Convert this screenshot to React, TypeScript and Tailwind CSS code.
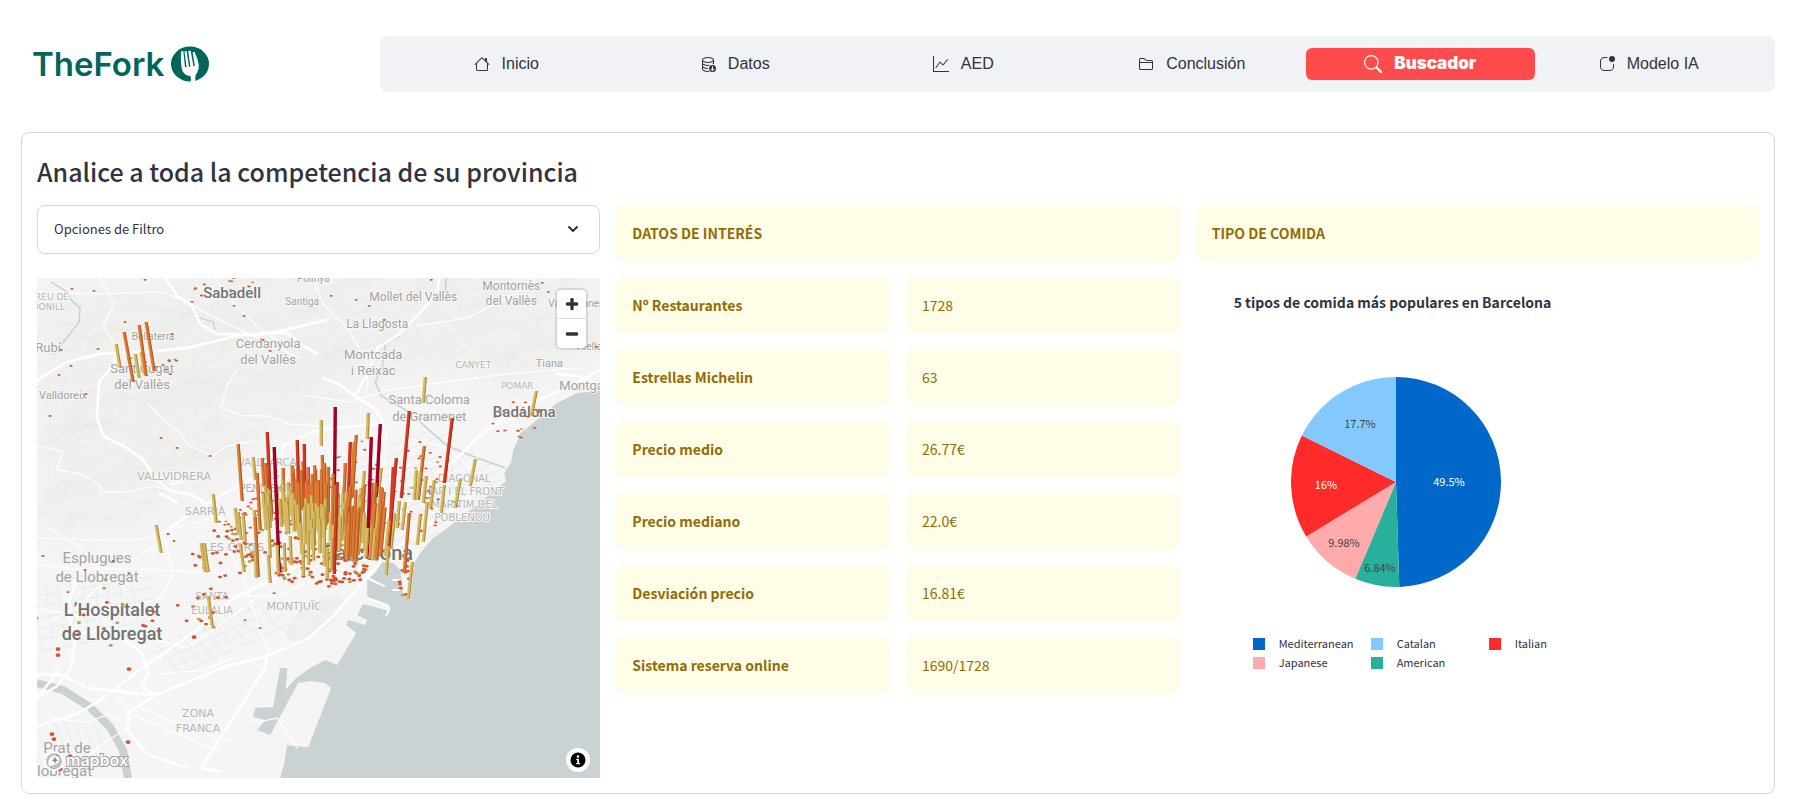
import type { ReactNode } from "react";
import {
  BsAppIndicator,
  BsDatabaseDown,
  BsFolder2,
  BsGraphUp,
  BsHouse,
  BsSearch,
} from "react-icons/bs";
import { ChevronDown, Minus, Plus } from "lucide-react";

/* ---------- data ---------- */

const navItems = [
  { label: "Inicio", Icon: BsHouse },
  { label: "Datos", Icon: BsDatabaseDown },
  { label: "AED", Icon: BsGraphUp },
  { label: "Conclusión", Icon: BsFolder2 },
  { label: "Buscador", Icon: BsSearch, active: true },
  { label: "Modelo IA", Icon: BsAppIndicator },
];

const stats = [
  ["Nº Restaurantes", "1728"],
  ["Estrellas Michelin", "63"],
  ["Precio medio", "26.77€"],
  ["Precio mediano", "22.0€"],
  ["Desviación precio", "16.81€"],
  ["Sistema reserva online", "1690/1728"],
];

/* Clockwise from the top */
const slices = [
  { value: 49.5, label: "49.5%", color: "#0068c9", text: "#ffffff", x: 158, y: 105 },
  { value: 6.84, label: "6.84%", color: "#29b09d", text: "#444444", x: 89, y: 191 },
  { value: 9.98, label: "9.98%", color: "#ffabab", text: "#444444", x: 53, y: 166 },
  { value: 15.98, label: "16%", color: "#ff2b2b", text: "#ffffff", x: 35, y: 108 },
  { value: 17.7, label: "17.7%", color: "#83c9ff", text: "#444444", x: 69, y: 47 },
];

const legend = [
  { name: "Mediterranean", swatch: "bg-[#0068c9]" },
  { name: "Catalan", swatch: "bg-[#83c9ff]" },
  { name: "Italian", swatch: "bg-[#ff2b2b]" },
  { name: "Japanese", swatch: "bg-[#ffabab]" },
  { name: "American", swatch: "bg-[#29b09d]" },
];

/* ---------- map ---------- */

type Tone = "y" | "o" | "r" | "m";
type Bar = [number, number, number, number, Tone];

const tones: Record<Tone, [string, string]> = {
  y: ["#d8ba62", "#a68c3c"],
  o: ["#de7a33", "#ab5722"],
  r: ["#da3a22", "#a32a18"],
  m: ["#b0002a", "#80001e"],
};

const fixedBars: Bar[] = [
  [79, 66, 83, 90, "y"], [87, 54, 96, 104, "o"], [102, 47, 109, 98, "o"], [109, 44, 117, 93, "o"],
  [98, 76, 102, 100, "y"], [104, 74, 108, 97, "y"],
  [298, 129, 297, 235, "m"], [300, 204, 297, 296, "r"], [343, 146, 339, 219, "m"],
  [334, 159, 330, 279, "m"], [237, 169, 242, 294, "m"], [230, 154, 234, 239, "r"],
  [260, 162, 262, 229, "r"], [267, 166, 268, 230, "r"], [313, 164, 311, 219, "r"],
  [372, 133, 364, 220, "r"], [415, 140, 407, 205, "r"], [359, 180, 351, 275, "r"],
  [356, 189, 352, 268, "r"], [201, 166, 205, 223, "o"], [225, 180, 227, 209, "o"],
  [228, 185, 230, 215, "o"], [220, 195, 223, 252, "o"], [246, 190, 246, 219, "o"],
  [218, 239, 221, 299, "o"], [285, 177, 286, 222, "o"], [291, 189, 291, 245, "o"],
  [319, 157, 315, 219, "o"], [317, 164, 314, 215, "o"], [308, 185, 306, 245, "o"],
  [387, 168, 381, 222, "o"], [372, 235, 367, 295, "o"], [256, 191, 258, 230, "o"],
  [264, 192, 265, 232, "o"], [287, 185, 288, 235, "o"], [281, 202, 282, 250, "o"],
  [275, 204, 276, 248, "o"], [296, 196, 295, 246, "o"],
  [284, 142, 284, 168, "y"], [331, 135, 330, 161, "y"], [216, 179, 218, 202, "y"],
  [176, 216, 179, 245, "y"], [198, 230, 201, 256, "y"], [201, 234, 204, 262, "y"],
  [206, 236, 208, 264, "y"], [164, 265, 168, 294, "y"], [167, 265, 171, 294, "y"],
  [203, 266, 207, 294, "y"], [119, 247, 124, 275, "y"], [171, 318, 175, 348, "y"],
  [375, 284, 371, 321, "y"], [379, 192, 377, 222, "y"], [383, 194, 380, 222, "y"],
  [389, 198, 386, 225, "y"], [397, 202, 393, 230, "y"], [407, 207, 404, 235, "y"],
  [423, 201, 418, 230, "y"], [438, 181, 433, 208, "y"], [362, 223, 360, 250, "y"],
  [368, 224, 365, 252, "y"], [383, 237, 380, 267, "y"], [390, 224, 386, 264, "y"],
  [351, 268, 349, 297, "y"], [388, 99, 386, 125, "y"], [499, 113, 494, 138, "y"],
  [231, 277, 233, 305, "y"], [232, 254, 233, 280, "y"], [253, 258, 254, 287, "y"],
  [240, 267, 241, 296, "y"], [247, 265, 248, 294, "y"], [218, 271, 219, 300, "y"],
  [266, 265, 266, 298, "y"], [290, 270, 290, 300, "y"], [327, 193, 325, 219, "y"],
  [344, 190, 341, 216, "y"], [251, 204, 252, 234, "y"], [226, 215, 229, 252, "y"],
  [231, 215, 233, 250, "y"], [217, 232, 219, 262, "y"],
];

/* Deterministic noise keeps the drawing identical between renders */
function noise(seed: number) {
  let s = seed;
  return () => {
    s = (s * 16807) % 2147483647;
    return s / 2147483647;
  };
}

function clusterBars(): Bar[] {
  const rnd = noise(4217);
  const bars: Bar[] = [];
  const add = (n: number, x0: number, x1: number, y0: number, y1: number, h0: number, h1: number, t: Tone) => {
    for (let i = 0; i < n; i++) {
      const x = x0 + rnd() * (x1 - x0);
      const y = y0 + rnd() * (y1 - y0);
      const h = h0 + rnd() * (h1 - h0);
      bars.push([x + (x - 285) * 0.0016 * h, y - h, x, y, t]);
    }
  };
  add(22, 256, 294, 226, 250, 36, 46, "o");
  add(28, 254, 300, 232, 262, 26, 32, "y");
  add(18, 222, 256, 228, 256, 24, 32, "y");
  add(14, 264, 300, 262, 292, 26, 34, "y");
  add(34, 298, 342, 240, 284, 26, 34, "y");
  add(24, 308, 344, 258, 284, 44, 58, "o");
  add(16, 326, 354, 256, 282, 28, 36, "y");
  return bars;
}

const bars = [...fixedBars, ...clusterBars()].sort((a, b) => a[3] - b[3]);

const dots = (() => {
  const rnd = noise(991);
  const out: { x: number; y: number; c: string }[] = [];
  const colors = ["#d5532f", "#d5532f", "#d5532f", "#b3a25a"];
  const fill = (n: number, cx: number, cy: number, rx: number, ry: number) => {
    for (let i = 0; i < n; i++) {
      const a = rnd() * Math.PI * 2;
      const r = Math.sqrt(rnd());
      out.push({ x: cx + Math.cos(a) * r * rx, y: cy + Math.sin(a) * r * ry, c: colors[Math.floor(rnd() * 4)] });
    }
  };
  fill(150, 265, 250, 78, 48);
  fill(80, 285, 292, 50, 17);
  fill(34, 190, 270, 40, 30);
  fill(40, 350, 205, 60, 50);
  fill(26, 388, 215, 34, 40);
  fill(12, 366, 295, 6, 24);
  fill(20, 480, 140, 26, 20);
  fill(14, 168, 330, 32, 20);
  fill(12, 116, 88, 30, 14);
  fill(10, 190, 12, 34, 16);
  fill(14, 75, 335, 45, 34);
  return out;
})();

const looseDots: [number, number][] = [
  [35, 11], [57, 13], [108, 2], [88, 44], [24, 72], [61, 71], [34, 88], [22, 97], [49, 116], [13, 138],
  [124, 160], [140, 170], [173, 178], [155, 24], [197, 28], [207, 38], [135, 56], [226, 62], [233, 73],
  [294, 18], [319, 22], [332, 28], [347, 42], [394, 2], [6, 278], [48, 292], [31, 314], [21, 371], [21, 377],
  [92, 391], [91, 464], [15, 456], [17, 461], [33, 478], [23, 491], [21, 476], [0, 340], [76, 283], [92, 295],
  [208, 342], [223, 350], [237, 315], [157, 359], [131, 256], [137, 263], [505, 5], [559, 69], [511, 14],
];

const minorRoads = [
  "M0 14 L60 16 L125 14 L150 24 L178 40 L220 60 L262 80",
  "M62 0 L78 25 L66 48 L80 70",
  "M178 0 L200 30 L228 55 L250 68",
  "M110 125 L118 133 L130 145 L142 154 L152 168 L176 178 L190 168 L212 164",
  "M200 92 L190 108 L184 130 L206 138 L230 138 L252 146 L300 150",
  "M0 167 L26 174 L20 192 L44 196 L62 206 L64 214 L90 214 L118 208 L140 215",
  "M0 287 L40 291 L100 291 L200 296",
  "M0 260 L50 262 L100 262 L140 250 L182 238",
  "M12 250 L45 270 L70 300 L40 330 L0 350",
  "M60 340 L110 360 L150 370 L220 320",
  "M0 330 L40 338 L36 372 L14 396",
  "M106 275 L128 262 L136 296 L124 320 L70 335",
  "M122 396 L165 392 L196 380",
  "M190 318 L240 318 L268 306 L300 302 L330 286",
  "M260 470 L240 440 L215 445",
  "M10 440 L50 444 L72 436 L90 450 L60 470 L30 500",
  "M80 418 L94 436 L118 446 L180 472",
  "M104 430 L150 450 L195 464",
  "M270 118 L312 124 L352 112 L410 104 L470 96 L540 90",
  "M430 170 L452 150 L486 136 L510 118",
  "M370 160 L410 170 L440 196 L428 222",
  "M300 260 L350 236 L400 204 L440 180",
  "M350 150 L346 200 L352 240",
  "M190 268 L206 300 L222 350 L232 376",
  "M170 270 L186 256 L220 250 L262 232",
  "M240 200 L226 230 L210 268",
  "M275 0 L286 26 L310 50 L330 84 L330 112",
  "M500 0 L470 20 L430 40 L380 48",
];

const majorRoads = [
  "M0 102 L30 84 L62 76 L110 74 L150 70 L200 58 L240 54 L290 42",
  "M128 0 L140 18 L155 28 L163 46 L180 56 L215 57 L250 55 L266 68 L280 76",
  "M80 76 L74 90 L62 104 L60 140 L66 158 L90 170 L104 180 L122 204 L134 213 L152 216 L164 222 L186 244 L210 262",
  "M134 206 L144 204 M122 215 L140 224",
  "M130 252 L160 232 L200 208 L240 190 L246 168 L275 154 L300 150 L340 146",
  "M286 100 L302 106 L318 118 L336 130 L345 142 L342 170 L332 196",
  "M318 118 L330 96 L340 70 L360 58 L382 36 L400 14 L402 0",
  "M400 196 L420 180 L440 160 L458 146 L470 136 L500 122 L530 110 L563 92",
  "M563 108 L540 98 L520 96",
  "M0 448 L40 436 L60 424 L108 388 L160 352 L200 318 L240 300 L260 288",
  "M0 396 L26 397 L50 410 L118 417 L190 388 L230 378 L272 360 L296 338 L320 310 L345 282",
  "M40 300 L30 330 L38 362 L34 390 L20 408 L0 420",
  "M22 360 L70 350 L104 374 L112 396 L104 408 L118 417",
  "M118 417 L92 434 L90 452 L110 476 L150 490",
  "M230 378 L228 390 L192 446 L164 490 L182 493",
  "M345 282 L372 260 L400 240 L430 224",
  "M22 392 L0 420",
];

const grid = (() => {
  const r: string[] = [];
  for (let i = 0; i < 10; i++) r.push(`M${120 + i * 11} ${366 - i * 5} l20 26`);
  for (let i = 0; i < 4; i++) r.push(`M${118 + i * 8} ${375 + i * 7} l110 -50`);
  for (let i = 0; i < 22; i++) r.push(`M${230 + i * 9} ${262 - i * 4} l22 36`);
  for (let i = 0; i < 12; i++) r.push(`M${210 + i * 9} ${226 + i * 6} l190 -76`);
  for (let i = 0; i < 9; i++) r.push(`M${4 + i * 12} ${366 - i * 3} l-8 -58`);
  for (let i = 0; i < 6; i++) r.push(`M0 ${318 + i * 11} l118 -20`);
  for (let i = 0; i < 9; i++) r.push(`M${i * 9} ${500 - i * 2} l-20 -52`);
  return r.join(" ");
})();

type Label = [string, number, number, number, ("start" | "middle" | "end")?, boolean?];

const labels: Label[] = [
  ["Terrassa", 46, 0, 15, "end", true],
  ["CREU DE", 32, 22, 9, "end"],
  ["CABONILL", 28, 32, 9, "end"],
  ["Sabadell", 195, 20, 15, "middle", true],
  ["Polinyà", 276, 4, 10],
  ["Santiga", 265, 27, 10],
  ["Rubí", 24, 74, 13, "end"],
  ["Bellaterra", 116, 62, 10],
  ["Sant Cugat", 105, 95, 13],
  ["del Vallès", 105, 111, 13],
  ["Valldoreix", 26, 121, 11],
  ["Cerdanyola", 231, 70, 13],
  ["del Vallès", 231, 86, 13],
  ["VALLVIDRERA", 137, 202, 11],
  ["SARRIÀ", 168, 237, 11],
  ["VALLCARCA", 230, 188, 10],
  ["I ELS", 230, 201, 10],
  ["PENITENTS", 230, 214, 10],
  ["LES CORTS", 197, 273, 11],
  ["Mollet del Vallès", 376, 23, 12],
  ["Montornès", 474, 12, 12],
  ["del Vallès", 474, 27, 12],
  ["Vallromanes", 511, 29, 10, "start"],
  ["Alella", 540, 72, 10, "start"],
  ["La Llagosta", 340, 50, 12],
  ["Montcada", 336, 81, 13],
  ["i Reixac", 336, 97, 13],
  ["CANYET", 436, 90, 9],
  ["Tiana", 512, 89, 11],
  ["POMAR", 480, 111, 9],
  ["Montgat", 522, 112, 13, "start"],
  ["Badalona", 487, 139, 15, "middle", true],
  ["Santa Coloma", 392, 126, 13],
  ["de Gramenet", 392, 143, 13],
  ["DIAGONAL", 427, 204, 10],
  ["MAR I EL FRONT", 426, 217, 10],
  ["MARÍTIM DEL", 427, 230, 10],
  ["POBLENOU", 425, 243, 10],
  ["Esplugues", 60, 285, 15],
  ["de Llobregat", 60, 304, 15],
  ["L’Hospitalet", 75, 338, 18, "middle", true],
  ["de Llobregat", 75, 362, 18, "middle", true],
  ["SANTA", 175, 322, 10],
  ["EULALIA", 175, 336, 10],
  ["MONTJUÏC", 257, 332, 11],
  ["ZONA", 161, 439, 11],
  ["FRANCA", 161, 454, 11],
  ["Barcelona", 331, 282, 20, "middle", true],
  ["Prat de", 30, 475, 15],
  ["Llobregat", 55, 498, 15, "end"],
];

const sea =
  "M563 113 L540 115 L520 125 L503 139 L490 150 L483 155 L480 163 L476 172 L474 184 L467 195 L469 203 L458 212 L448 220 L440 227 L420 242 L408 252 L396 260 L383 275 L377 285 L373 322 L366 315 L363 292 L356 285 L345 284 L338 295 L330 302 L330 319 L352 329 L352 333 L326 326 L320 337 L330 342 L328 347 L311 342 L309 347 L319 355 L300 387 L288 382 L273 390 L258 401 L248 412 L250 397 L250 390 L243 390 L236 429 L218 430 L216 439 L228 442 L220 452 L233 457 L261 405 L273 403 L288 405 L294 410 L273 464 L271 469 L250 467 L247 485 L243 500 L563 500 Z";

const isDistrict = (text: string) => text === text.toUpperCase();

function ProvinceMap() {
  return (
    <svg
      viewBox="0 0 563 500"
      preserveAspectRatio="xMidYMid slice"
      className="block h-full w-full"
      role="img"
      aria-label="Mapa de restaurantes en Barcelona"
    >
      <defs>
        <filter id="relief" x="0" y="0" width="100%" height="100%">
          <feTurbulence type="fractalNoise" baseFrequency="0.014 0.024" numOctaves="4" seed="8" />
          <feDiffuseLighting surfaceScale="9" diffuseConstant="1.1" lightingColor="#ffffff">
            <feDistantLight azimuth="225" elevation="58" />
          </feDiffuseLighting>
        </filter>
        <filter id="soften" x="-20%" y="-20%" width="140%" height="140%">
          <feGaussianBlur stdDeviation="14" />
        </filter>
        <mask id="hills">
          <path
            d="M0 20 L240 -10 L563 0 L563 70 L480 110 L380 90 L310 130 L230 150 L170 210 L90 250 L0 260 Z"
            fill="#fff"
            filter="url(#soften)"
          />
          <ellipse cx="278" cy="340" rx="34" ry="14" fill="#fff" transform="rotate(-35 278 340)" />
        </mask>
      </defs>
      <rect width="563" height="500" fill="#f4f5f4" />
      <g mask="url(#hills)">
        <rect width="563" height="500" fill="#efefee" />
        <rect width="563" height="500" filter="url(#relief)" opacity="0.09" />
      </g>
      <path d={grid} stroke="#e9ecec" strokeWidth="1" fill="none" />
      <g fill="none" stroke="#c9d2d3" strokeLinejoin="round">
        <path d="M0 405 L26 412 L53 429 L73 449 L86 472 L91 500" strokeWidth="8" />
        <path d="M16 76 L30 60 L42 44 L43 30 L34 22 L30 14 L14 4" strokeWidth="1.5" />
        <path
          d="M409 0 L408 14 L398 24 M363 58 L348 66 L345 90 L338 104 L344 118 L372 134 L396 156 L410 168 L440 180 L468 190"
          strokeWidth="1.6"
        />
        <path d="M162 40 L176 44 L178 52" strokeWidth="1.5" />
      </g>
      <path d={sea} fill="#cad2d3" />
      <g fill="none" stroke="#ffffff" strokeLinejoin="round" strokeLinecap="round">
        {minorRoads.map((d) => (
          <path key={d} d={d} strokeWidth="1.2" />
        ))}
        {majorRoads.map((d) => (
          <path key={d} d={d} strokeWidth="2.6" />
        ))}
        <path
          d="M332 301 L347 308 M356 302 L362 302 M356 312 L362 312 M330 320 L350 327 Q354 331 349 337"
          strokeWidth="2"
        />
      </g>
      <g stroke="#f7f8f7" strokeWidth="2" strokeLinejoin="round" paintOrder="stroke">
        {labels.map(([text, x, y, size, anchor = "middle", strong]) => (
          <text
            key={`${text}${x}${y}`}
            x={x}
            y={y}
            fontFamily={isDistrict(text) ? "'DejaVu Sans', sans-serif" : "Roboto, 'Open Sans', sans-serif"}
            fontSize={size}
            textAnchor={anchor}
            fontWeight={strong ? 500 : 400}
            fill={strong ? "#727272" : isDistrict(text) ? "#b6b6b6" : "#a2a2a2"}
          >
            {text}
          </text>
        ))}
      </g>
      <g>
        {dots.map((d, i) => (
          <ellipse key={i} cx={d.x} cy={d.y} rx={d.y > 250 ? 2 : 1.7} ry={d.y > 250 ? 1.4 : 0.9} fill={d.c} />
        ))}
        {looseDots.map(([x, y]) => (
          <ellipse key={`${x}-${y}`} cx={x} cy={y} rx={y > 350 ? 2.4 : 1.6} ry={y > 350 ? 1.9 : 0.9} fill="#d5532f" />
        ))}
      </g>
      <g>
        {bars.map(([x1, y1, x2, y2, tone], i) => (
          <g key={i}>
            <path
              d={`M${x1 - 1.6} ${y1} L${x1 + 1.6} ${y1} L${x2 + 1.6} ${y2} L${x2 - 1.6} ${y2} Z`}
              fill={tones[tone][0]}
            />
            <path
              d={`M${x1 + 0.6} ${y1} L${x1 + 1.6} ${y1} L${x2 + 1.6} ${y2} L${x2 + 0.6} ${y2} Z`}
              fill={tones[tone][1]}
            />
          </g>
        ))}
      </g>
      <g>
        <circle cx="17" cy="483" r="9" fill="#a9a9a9" fillOpacity="0.7" stroke="#ffffff" strokeWidth="2" />
        <path d="M12 488 Q10 481 15 478 Q20 476 22 480 Q24 486 12 488 Z" fill="#ffffff" />
        <path d="M18 478.5 L19.2 481 L21.5 482 L19.2 483 L18 485.5 L16.8 483 L14.5 482 L16.8 481 Z" fill="#8f8f8f" />
        <text
          x="29"
          y="488"
          fontFamily="Inter, 'Open Sans', sans-serif"
          fontSize="16"
          fontWeight="600"
          fill="#ffffff"
          stroke="#a0a0a0"
          strokeWidth="2"
          paintOrder="stroke"
        >
          mapbox
        </text>
      </g>
    </svg>
  );
}

/* ---------- pieces ---------- */

function Logo() {
  return (
    <svg width="158" height="40" viewBox="0 0 158 40" role="img" aria-label="TheFork" className="block">
      <text x="-1" y="32" fontFamily="Inter, 'Open Sans', sans-serif" fontSize="33" fontWeight="600" fill="#00665c">
        TheFork
      </text>
    </svg>
  );
}

function ForkMark() {
  return (
    <svg width="38" height="36" viewBox="0 0 38 36" aria-hidden="true" className="block">
      <ellipse cx="19" cy="18" rx="19" ry="17.5" fill="#00665c" />
      <path
        d="M13.5 5.5 L15.5 5 L18 21 L19.3 20.8 L17.2 5 L19.7 4.7 L22.4 20.3 L23.8 20 L21.6 6 L23.6 6 Q27 13 27.8 19 Q28 25 24.8 28.5 Q24 31 24.5 36 L19.5 36 Q20.5 32.5 19.3 30 Q13 29.5 11 24 Q9.5 17 10 5.5 L12.3 5 L14 21 L15.6 21.3 Z"
        fill="#ffffff"
      />
    </svg>
  );
}

function Banner({ children, strong = false }: { children: ReactNode; strong?: boolean }) {
  return (
    <div
      className={
        strong
          ? "flex h-14 items-center rounded-lg bg-[#fffce7] px-4 text-sm font-bold text-[#926c05]"
          : "flex h-14 items-center rounded-lg bg-[#fffce7] px-4 text-sm text-[#926c05]"
      }
    >
      {children}
    </div>
  );
}

function Pie() {
  let start = 0;
  const point = (share: number) => {
    const a = (share / 100) * Math.PI * 2;
    return `${105 + 105 * Math.sin(a)} ${105 - 105 * Math.cos(a)}`;
  };
  return (
    <svg width="210" height="210" viewBox="0 0 210 210" role="img" aria-label="Tipos de comida" className="block">
      {slices.map((s) => {
        const from = start;
        start += s.value;
        return <path key={s.label} d={`M105 105 L${point(from)} A105 105 0 0 1 ${point(start)} Z`} fill={s.color} />;
      })}
      {slices.map((s) => (
        <text key={s.label} x={s.x} y={s.y + 4} fontSize="11" textAnchor="middle" fill={s.text}>
          {s.label}
        </text>
      ))}
    </svg>
  );
}

export default function App() {
  return (
    <div className="min-h-screen bg-white pt-9 pr-[35px] pb-3 pl-[21px] font-['Noto_Sans_CJK_SC','Open_Sans',sans-serif] text-[#31333f]">
      <header className="flex items-center gap-4">
        <div className="flex w-[343px] shrink-0 items-center pl-3">
          <div className="w-[138px] shrink-0">
            <Logo />
          </div>
          <ForkMark />
        </div>
        <nav className="flex h-14 flex-1 items-center rounded-lg bg-[#f0f2f6] px-3 font-['Liberation_Sans',Arial,sans-serif] text-base">
          {navItems.map(({ label, Icon, active }) => (
            <a
              key={label}
              href={`#${label}`}
              aria-current={active ? "page" : undefined}
              className={
                active
                  ? "flex h-8 flex-1 items-center justify-center gap-3 rounded-md bg-[#ff4b4b] font-['Inter',sans-serif] text-[17px] font-black text-white"
                  : "flex h-8 flex-1 items-center justify-center gap-3 rounded-md"
              }
            >
              <Icon className={active ? "size-[18px]" : "size-4"} />
              {label}
            </a>
          ))}
        </nav>
      </header>

      <main className="mt-10 rounded-lg border border-[#d6d6d9] p-[15px]">
        <h1 className="mt-1.5 text-[25px] leading-[34px] font-medium">Analice a toda la competencia de su provincia</h1>

        <div className="mt-[17px] grid grid-cols-3 gap-4">
          <section>
            <button
              type="button"
              aria-expanded="false"
              className="flex h-[49px] w-full items-center justify-between rounded-lg border border-[#d6d6d9] px-4 pb-0.5 text-left text-[13px]"
            >
              Opciones de Filtro
              <ChevronDown className="mr-0.5 size-4" strokeWidth={3} />
            </button>
            <div className="relative mt-6 h-[500px] overflow-hidden">
              <ProvinceMap />
              <div className="absolute top-3 right-3.5 flex flex-col divide-y divide-[#dddddd] rounded bg-white text-[#333333] shadow-[0_0_0_2px_rgba(0,0,0,0.1)]">
                <button type="button" aria-label="Acercar" className="flex size-[29px] items-center justify-center">
                  <Plus className="size-4" strokeWidth={5} />
                </button>
                <button type="button" aria-label="Alejar" className="flex size-[29px] items-center justify-center">
                  <Minus className="size-4" strokeWidth={5} />
                </button>
              </div>
              <button
                type="button"
                aria-label="Información"
                className="absolute right-2.5 bottom-1.5 flex size-6 items-center justify-center rounded-full bg-white"
              >
                <svg viewBox="0 0 16 16" className="size-4" aria-hidden="true">
                  <circle cx="8" cy="8" r="7.5" fill="#000000" />
                  <circle cx="8" cy="4.5" r="1.3" fill="#ffffff" />
                  <path d="M6.2 6.8 H9 V11 H10 V12.2 H6.2 V11 H7.2 V8 H6.2 Z" fill="#ffffff" />
                </svg>
              </button>
            </div>
          </section>

          <section className="flex flex-col gap-4">
            <Banner strong>DATOS DE INTERÉS</Banner>
            <dl className="flex flex-col gap-4">
              {stats.map(([name, value]) => (
                <div key={name} className="grid grid-cols-2 gap-4">
                  <dt>
                    <Banner strong>{name}</Banner>
                  </dt>
                  <dd>
                    <Banner>{value}</Banner>
                  </dd>
                </div>
              ))}
            </dl>
          </section>

          <section>
            <Banner strong>TIPO DE COMIDA</Banner>
            <h2 className="mt-[31px] pl-[38px] text-sm leading-5 font-bold">
              5 tipos de comida más populares en Barcelona
            </h2>
            <div className="mt-[65px] pl-[95px]">
              <Pie />
            </div>
            <ul className="mt-[47px] grid grid-cols-[repeat(3,118px)] pl-[57px] text-[11px] leading-[19px]">
              {legend.map(({ name, swatch }) => (
                <li key={name} className="flex items-center gap-[14px]">
                  <span className={`size-3 ${swatch}`} />
                  {name}
                </li>
              ))}
            </ul>
          </section>
        </div>
      </main>
    </div>
  );
}
